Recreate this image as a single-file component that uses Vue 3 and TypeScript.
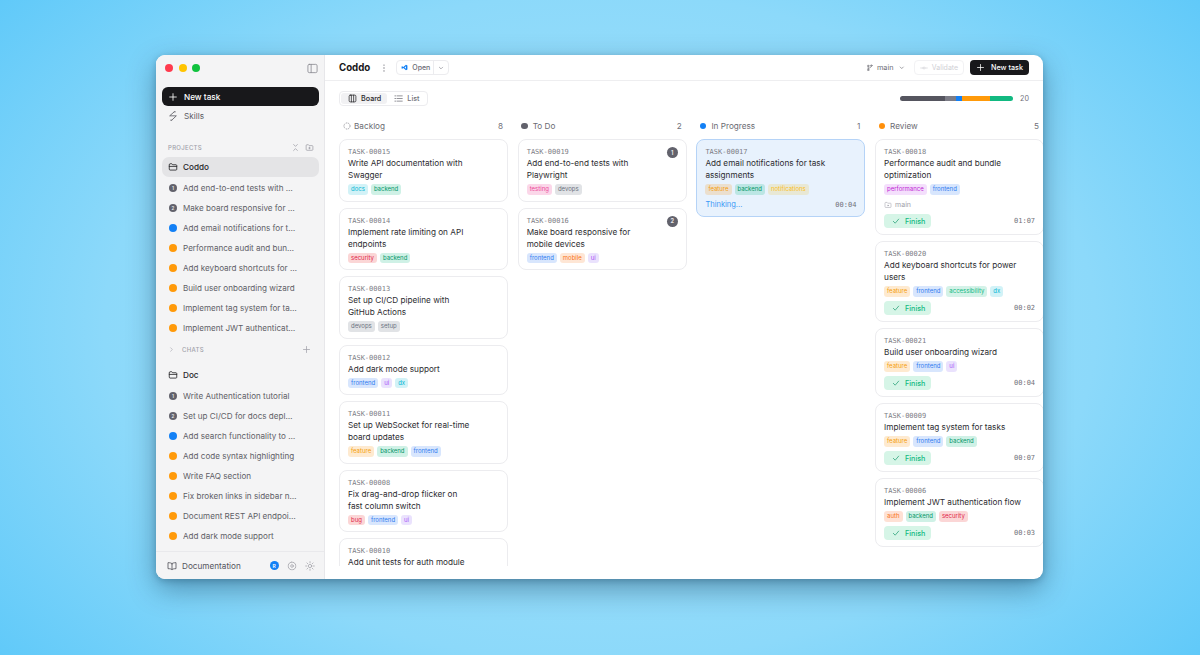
<script setup lang="ts">
interface Task { id: string; title: string; tags: string[]; badge?: number; branch?: boolean; time?: string; finish?: boolean; thinking?: boolean; narrow?: boolean }
interface Column { name: string; count: number; kind: string; tasks: Task[] }
interface SideItem { title: string; status: string; n?: number }

const project: SideItem[] = [
  { title: 'Add end-to-end tests with Playwright', status: 'todo', n: 1 },
  { title: 'Make board responsive for mobile devices', status: 'todo', n: 2 },
  { title: 'Add email notifications for task assignments', status: 'active' },
  { title: 'Performance audit and bundle optimization', status: 'review' },
  { title: 'Add keyboard shortcuts for power users', status: 'review' },
  { title: 'Build user onboarding wizard', status: 'review' },
  { title: 'Implement tag system for tasks', status: 'review' },
  { title: 'Implement JWT authentication flow', status: 'review' },
]
const doc: SideItem[] = [
  { title: 'Write Authentication tutorial', status: 'todo', n: 1 },
  { title: 'Set up CI/CD for docs deployment', status: 'todo', n: 2 },
  { title: 'Add search functionality to docs', status: 'active' },
  { title: 'Add code syntax highlighting', status: 'review' },
  { title: 'Write FAQ section', status: 'review' },
  { title: 'Fix broken links in sidebar navigation', status: 'review' },
  { title: 'Document REST API endpoints', status: 'review' },
  { title: 'Add dark mode support', status: 'review' },
]
const columns: Column[] = [
  { name: 'Backlog', count: 8, kind: 'backlog', tasks: [
    { id: 'TASK-00015', title: 'Write API documentation with Swagger', tags: ['docs', 'backend'] },
    { id: 'TASK-00014', title: 'Implement rate limiting on API endpoints', tags: ['security', 'backend'] },
    { id: 'TASK-00013', title: 'Set up CI/CD pipeline with GitHub Actions', tags: ['devops', 'setup'], narrow: true },
    { id: 'TASK-00012', title: 'Add dark mode support', tags: ['frontend', 'ui', 'dx'] },
    { id: 'TASK-00011', title: 'Set up WebSocket for real-time board updates', tags: ['feature', 'backend', 'frontend'] },
    { id: 'TASK-00008', title: 'Fix drag-and-drop flicker on fast column switch', tags: ['bug', 'frontend', 'ui'], narrow: true },
    { id: 'TASK-00010', title: 'Add unit tests for auth module', tags: ['testing', 'backend'] },
  ] },
  { name: 'To Do', count: 2, kind: 'todo', tasks: [
    { id: 'TASK-00019', title: 'Add end-to-end tests with Playwright', tags: ['testing', 'devops'], badge: 1, narrow: true },
    { id: 'TASK-00016', title: 'Make board responsive for mobile devices', tags: ['frontend', 'mobile', 'ui'], badge: 2, narrow: true },
  ] },
  { name: 'In Progress', count: 1, kind: 'active', tasks: [
    { id: 'TASK-00017', title: 'Add email notifications for task assignments', tags: ['feature', 'backend', 'notifications'], thinking: true, time: '00:04' },
  ] },
  { name: 'Review', count: 5, kind: 'review', tasks: [
    { id: 'TASK-00018', title: 'Performance audit and bundle optimization', tags: ['performance', 'frontend'], branch: true, finish: true, time: '01:07' },
    { id: 'TASK-00020', title: 'Add keyboard shortcuts for power users', tags: ['feature', 'frontend', 'accessibility', 'dx'], finish: true, time: '00:02' },
    { id: 'TASK-00021', title: 'Build user onboarding wizard', tags: ['feature', 'frontend', 'ui'], finish: true, time: '00:04' },
    { id: 'TASK-00009', title: 'Implement tag system for tasks', tags: ['feature', 'frontend', 'backend'], finish: true, time: '00:07' },
    { id: 'TASK-00006', title: 'Implement JWT authentication flow', tags: ['auth', 'backend', 'security'], finish: true, time: '00:03' },
  ] },
]
const segments = [
  { color: '#55555f', width: 45 },
  { color: '#7c7c86', width: 11 },
  { color: '#1380f5', width: 6 },
  { color: '#ff9a0a', width: 28 },
  { color: '#12b981', width: 23 },
]
</script>

<template>
  <div class="page">
    <div class="window">
      <aside class="sidebar">
        <div class="titlebar">
          <div class="lights"><i class="red"></i><i class="yellow"></i><i class="green"></i></div>
          <svg class="ic panel" viewBox="0 0 12 12"><rect x="1" y="1.5" width="10" height="9" rx="1.5"/><path d="M4.5 1.500v9"/></svg>
        </div>
        <div class="side-scroll">
          <button class="new-task">
            <svg class="ic" viewBox="0 0 12 12"><path d="M6 2v8M2 6h8"/></svg>
            <span>New task</span>
          </button>
          <div class="skills">
            <svg class="ic" viewBox="0 0 12 12"><path d="M7.500 1 2 5.800h8L4.500 11M8.800 1H7.500M3.200 11h1.300"/></svg>
            <span>Skills</span>
          </div>
          <div class="section-head">
            <span>PROJECTS</span>
            <div class="section-icons">
              <svg class="ic" viewBox="0 0 12 12"><path d="M3.500 2 6 4.500 8.500 2M3.500 10 6 7.500 8.500 10"/></svg>
              <svg class="ic" viewBox="0 0 12 12"><path d="M1.500 3.200c0-.5.4-.9.9-.9h2.200l1 1.200h4c.5 0 .9.4.9.9v4.400c0 .5-.4.9-.9.9H2.400c-.5 0-.9-.4-.9-.9z"/><path d="M6 5.600v2.200M4.900 6.700h2.200"/></svg>
            </div>
          </div>
          <div class="folder current">
            <svg class="ic" viewBox="0 0 12 12"><path d="M1.500 3c0-.5.4-.9.9-.9h2.200l1 1.200h4c.5 0 .9.4.9.9v4.600c0 .5-.4.9-.9.9H2.400c-.5 0-.9-.4-.9-.9zM1.500 5.300h9"/></svg>
            <span>Coddo</span>
          </div>
          <div v-for="item in project" :key="item.title" class="side-item">
            <span class="dot" :class="item.status">{{ item.n }}</span>
            <span class="side-title">{{ item.title }}</span>
          </div>
          <div class="chats">
            <svg class="ic chev" viewBox="0 0 12 12"><path d="M4.500 3 7.500 6 4.500 9"/></svg>
            <span>CHATS</span>
            <svg class="ic plus" viewBox="0 0 12 12"><path d="M6 2v8M2 6h8"/></svg>
          </div>
          <div class="folder doc">
            <svg class="ic" viewBox="0 0 12 12"><path d="M1.500 3c0-.5.4-.9.9-.9h2.200l1 1.200h4c.5 0 .9.4.9.9v4.600c0 .5-.4.9-.9.9H2.400c-.5 0-.9-.4-.9-.9zM1.500 5.300h9"/></svg>
            <span>Doc</span>
          </div>
          <div v-for="item in doc" :key="item.title" class="side-item">
            <span class="dot" :class="item.status">{{ item.n }}</span>
            <span class="side-title">{{ item.title }}</span>
          </div>
        </div>
        <footer class="side-foot">
          <svg class="ic book" viewBox="0 0 12 12"><path d="M6 3.200C5 2.300 3.500 2 1.200 2v7.200c2.300 0 3.800.3 4.800 1.200 1-.9 2.500-1.200 4.800-1.200V2C8.500 2 7 2.300 6 3.200zM6 3.200v7.200"/></svg>
          <span class="doc-label">Documentation</span>
          <span class="avatar">R</span>
          <svg class="ic foot-ic" viewBox="0 0 12 12"><path d="m6 1 1 .9 1.400-.2.600 1.300 1.300.6-.2 1.400.9 1-.9 1 .2 1.400-1.300.6-.6 1.300-1.400-.2-1 .9-1-.9-1.400.2-.6-1.300-1.300-.6.2-1.400-.9-1 .9-1-.2-1.400 1.300-.6.6-1.300 1.400.2z"/><circle cx="6" cy="6" r="1.600"/></svg>
          <svg class="ic foot-ic" viewBox="0 0 12 12"><circle cx="6" cy="6" r="2"/><path d="M6 .8v1.400M6 9.800v1.400M.8 6h1.400M9.800 6h1.400M2.300 2.300l1 1M8.700 8.700l1 1M2.300 9.700l1-1M8.700 3.300l1-1"/></svg>
        </footer>
      </aside>

      <main class="main">
        <header class="topbar">
          <strong class="brand">Coddo</strong>
          <svg class="kebab" viewBox="0 0 4 12"><circle cx="2" cy="2.500" r=".8"/><circle cx="2" cy="6" r=".8"/><circle cx="2" cy="9.500" r=".8"/></svg>
          <div class="open">
            <span class="open-main">
              <svg class="vscode" viewBox="0 0 12 12"><path d="M8.500 1.200 11 2.400v7.200l-2.500 1.200L4 6.800 2 8.300 1 7.800V4.200l1-.5 2 1.500z" fill="#1380f5"/><path d="M8.500 4 6 6l2.500 2z" fill="#fff"/></svg>
              Open
            </span>
            <span class="open-chev"><svg class="ic" viewBox="0 0 12 12"><path d="M3.500 4.800 6 7.300l2.500-2.500"/></svg></span>
          </div>
          <div class="spacer"></div>
          <div class="branch">
            <svg class="ic" viewBox="0 0 12 12"><circle cx="3.500" cy="9.500" r="1.200"/><circle cx="3.500" cy="3" r="1.200"/><circle cx="8.500" cy="2.500" r="1.200"/><path d="M3.500 4.200v4.100M8.500 3.700c0 2-2.500 2.800-5 3.300"/></svg>
            <span>main</span>
            <svg class="ic small" viewBox="0 0 12 12"><path d="M3.500 4.800 6 7.300l2.500-2.500"/></svg>
          </div>
          <div class="validate">
            <svg class="ic" viewBox="0 0 12 12"><path d="M1 6h3M8 6h3M4.500 6a1.500 1.500 0 1 0 3 0 1.500 1.500 0 1 0-3 0"/></svg>
            <span>Validate</span>
          </div>
          <button class="new-top">
            <svg class="ic" viewBox="0 0 12 12"><path d="M6 2v8M2 6h8"/></svg>
            <span>New task</span>
          </button>
        </header>

        <div class="toolbar">
          <div class="tabs">
            <div class="tab on">
              <svg class="ic" viewBox="0 0 12 12"><rect x="1.500" y="1.500" width="9" height="9" rx="1.500"/><path d="M4.500 1.500v9M7.500 1.500v9"/></svg>
              <span>Board</span>
            </div>
            <div class="tab">
              <svg class="ic" viewBox="0 0 12 12"><path d="M4 2.500h7M4 6h7M4 9.500h7M1.200 2.500h1M1.200 6h1M1.200 9.500h1"/></svg>
              <span>List</span>
            </div>
          </div>
          <div class="spacer"></div>
          <div class="stack">
            <span v-for="s in segments" :key="s.color" :style="{ background: s.color, width: s.width + 'px' }"></span>
          </div>
          <span class="total">20</span>
        </div>

        <div class="board">
          <section v-for="col in columns" :key="col.name" class="column">
            <div class="col-head">
              <svg v-if="col.kind === 'backlog'" class="backlog-ic" viewBox="0 0 10 10"><circle cx="5" cy="5" r="3.800" stroke-dasharray="1.700 1"/></svg>
              <i v-else class="col-dot" :class="col.kind"></i>
              <span class="col-name">{{ col.name }}</span>
              <span class="col-count">{{ col.count }}</span>
            </div>
            <article v-for="t in col.tasks" :key="t.id" class="card" :class="{ running: t.thinking }">
              <span v-if="t.badge" class="badge">{{ t.badge }}</span>
              <div class="task-id">{{ t.id }}</div>
              <div class="task-title" :class="{ narrow: t.narrow }">{{ t.title }}</div>
              <div class="tags"><span v-for="tag in t.tags" :key="tag" class="tag" :class="'tag-' + tag">{{ tag }}</span></div>
              <div v-if="t.branch" class="card-branch">
                <svg class="ic" viewBox="0 0 12 12"><path d="M1.500 3c0-.5.4-.9.9-.9h2.200l1 1.200h4c.5 0 .9.4.9.9v4.600c0 .5-.4.9-.9.900H2.400c-.5 0-.9-.4-.9-.9z"/><circle cx="6" cy="6.700" r=".8"/></svg>
                <span>main</span>
              </div>
              <div v-if="t.thinking" class="card-foot thinking-row">
                <span class="thinking">Thinking...</span>
                <span class="time">{{ t.time }}</span>
              </div>
              <div v-if="t.finish" class="card-foot">
                <span class="finish">
                  <svg class="ic" viewBox="0 0 12 12"><path d="m2 6.500 2.800 2.800L10 3.200"/></svg>
                  Finish
                </span>
                <span class="time">{{ t.time }}</span>
              </div>
            </article>
          </section>
        </div>
      </main>
    </div>
  </div>
</template>

<style>
html, body { margin: 0; padding: 0; }
</style>

<style scoped>
.page {
  box-sizing: border-box;
  width: 1200px;
  height: 655px;
  padding: 55px 157px 76px 156px;
  background: radial-gradient(ellipse 800px 540px at 50% 50%, #a8e3fb 0%, #8cd9fa 62%, #5cc8f9 100%);
  font-family: Inter, "Liberation Sans", sans-serif;
  overflow: hidden;
}
.window {
  display: flex;
  height: 524px;
  background: #fff;
  border-radius: 9px;
  overflow: hidden;
  box-shadow: 0 10px 28px rgba(10, 50, 80, .42), 0 2px 6px rgba(10, 50, 80, .25);
}
.ic { width: 10px; height: 10px; fill: none; stroke: currentColor; stroke-width: 1; stroke-linecap: round; stroke-linejoin: round; flex: none; }
.spacer { flex: 1; }

.sidebar { width: 169px; flex: none; display: flex; flex-direction: column; background: #f4f4f5; border-right: 1px solid #e7e7ea; box-sizing: border-box; }
.titlebar { height: 26px; flex: none; display: flex; align-items: center; justify-content: space-between; padding: 0 6px 0 9px; }
.lights { display: flex; gap: 5.500px; }
.lights i { width: 8px; height: 8px; border-radius: 50%; display: block; }
.red { background: #ff3b4e; } .yellow { background: #ffc400; } .green { background: #10c23e; }
.panel { color: #8a8a92; width: 11px; height: 11px; stroke-width: .9; }
.side-scroll { flex: 1; min-height: 0; overflow: hidden; padding: 6px 5px 0 6px; display: flex; flex-direction: column; }
.new-task { height: 19px; flex: none; display: flex; align-items: center; gap: 6px; padding: 0 0 0 6px; background: #18181b; color: #fff; border: 0; border-radius: 6px; font: 500 8.200px Inter, sans-serif; }
.skills { height: 20px; flex: none; display: flex; align-items: center; gap: 6px; padding-left: 6px; color: #5b5b63; font-size: 8.200px; font-weight: 400; }
.section-head { height: 14px; margin-top: 14px; flex: none; display: flex; align-items: center; justify-content: space-between; padding: 0 5px 0 6px; color: #a1a1aa; font-size: 6px; font-weight: 500; letter-spacing: .3px; }
.section-icons { display: flex; gap: 5px; color: #9d9da5; }
.section-icons .ic { width: 9px; height: 9px; }
.folder { height: 20px; flex: none; display: flex; align-items: center; gap: 5px; padding-left: 6px; color: #27272a; font-size: 8.200px; font-weight: 500; border-radius: 7px; }
.folder .ic { width: 10px; height: 10px; }
.folder.current { margin-top: 3px; margin-bottom: 1px; background: #e4e4e6; }
.side-item { height: 20px; flex: none; display: flex; align-items: center; gap: 6px; padding-left: 7px; color: #5f5f67; font-size: 8.100px; font-weight: 400; }
.side-title { width: 114px; overflow: hidden; white-space: nowrap; text-overflow: ellipsis; }
.dot { width: 8px; height: 8px; border-radius: 50%; flex: none; display: flex; align-items: center; justify-content: center; color: #e4e4e7; font-size: 4.500px; font-weight: 700; }
.dot.todo { background: #62626c; } .dot.active { background: #1380f5; } .dot.review { background: #ff9a0a; }
.chats { height: 20px; margin-top: 1px; margin-bottom: 6px; flex: none; display: flex; align-items: center; padding: 0 8px 0 6px; color: #a1a1aa; font-size: 6px; font-weight: 500; letter-spacing: .3px; }
.chats .chev { width: 7px; height: 7px; margin-right: 7px; }
.chats .plus { margin-left: auto; width: 9px; height: 9px; }
.folder.doc { margin-bottom: 1px; }
.side-foot { height: 28px; flex: none; display: flex; align-items: center; padding: 0 5px 0 11px; border-top: 1px solid #e9e9ec; box-sizing: border-box; color: #55555d; font-size: 8.200px; font-weight: 400; }
.book { width: 10px; height: 10px; margin-right: 5px; }
.doc-label { flex: 1; }
.avatar { width: 9.500px; height: 9.500px; border-radius: 50%; background: #1380f5; color: #fff; font-size: 5px; font-weight: 600; display: flex; align-items: center; justify-content: center; margin-right: 8px; }
.foot-ic { color: #9a9aa2; margin-right: 8px; stroke-width: .8; }
.foot-ic:last-child { margin-right: 4px; }

.main { flex: 1; min-width: 0; display: flex; flex-direction: column; }
.topbar { height: 26px; flex: none; box-sizing: border-box; display: flex; align-items: center; padding: 0 14px; border-bottom: 1px solid #eeeef0; }
.brand { font-size: 9.700px; font-weight: 700; color: #18181b; }
.kebab { width: 4px; height: 10px; fill: #71717a; margin: 0 10px 0 12px; }
.open { display: flex; align-items: center; height: 15px; width: 53px; box-sizing: border-box; border: 1px solid #ececef; border-radius: 4px; color: #6b6b73; font-size: 7px; font-weight: 500; }
.open-main { flex: 1; display: flex; align-items: center; gap: 4px; padding-left: 4px; }
.vscode { width: 7px; height: 7px; }
.open-chev { width: 14px; height: 100%; display: flex; align-items: center; justify-content: center; border-left: 1px solid #ececef; color: #8a8a92; }
.open-chev .ic { width: 8px; height: 8px; }
.branch { display: flex; align-items: center; gap: 3px; color: #6b6b73; font-size: 7.300px; margin-right: 9px; }
.branch .ic { width: 7.500px; height: 7.500px; }
.branch span { margin-right: 1px; }
.validate { width: 50px; height: 15px; box-sizing: border-box; display: flex; align-items: center; gap: 4px; justify-content: center; border: 1px solid #f2f2f4; border-radius: 4px; color: #d0d0d5; font-size: 7px; margin-right: 6px; }
.validate .ic { width: 8px; height: 8px; }
.new-top { width: 59px; height: 15px; display: flex; align-items: center; justify-content: center; gap: 6px; background: #18181b; color: #fff; border: 0; border-radius: 4px; padding: 0; font: 500 7.200px Inter, sans-serif; }
.new-top .ic { width: 9px; height: 9px; }

.toolbar { height: 15px; margin-top: 10px; flex: none; display: flex; align-items: center; padding: 0 14px; }
.tabs { display: flex; height: 15px; width: 89px; box-sizing: border-box; border: 1px solid #ececef; border-radius: 4px; padding: 1px; background: #fff; }
.tab { display: flex; align-items: center; gap: 4px; padding: 0 6px 0 7px; color: #71717a; font-size: 7.200px; font-weight: 500; border-radius: 3px; }
.tab.on { background: #f1f1f3; color: #27272a; }
.tab .ic { width: 9px; height: 9px; }
.stack { display: flex; height: 5px; border-radius: 3px; overflow: hidden; }
.stack span { display: block; height: 100%; }
.total { width: 9px; margin-left: 7px; text-align: right; font-size: 7.200px; color: #71717a; }

.board { flex: 1; min-height: 0; margin-top: 13px; margin-bottom: 13px; padding-left: 14px; display: flex; gap: 9.700px; overflow: hidden; }
.column { width: 169px; flex: none; display: flex; flex-direction: column; gap: 6px; }
.col-head { height: 14px; display: flex; align-items: center; padding: 0 5px 0 3.500px; flex: none; color: #6b6b73; font-size: 8.200px; font-weight: 400; }
.backlog-ic { width: 8px; height: 8px; fill: none; stroke: #8a8a92; stroke-width: 1; margin-right: 3.500px; }
.col-dot { width: 6.500px; height: 6.500px; border-radius: 50%; margin-right: 5px; display: block; }
.col-dot.todo { background: #62626c; } .col-dot.active { background: #1380f5; } .col-dot.review { background: #ff8f0a; }
.col-count { margin-left: auto; color: #71717a; }

.card { position: relative; flex: none; box-sizing: border-box; background: #fff; border: 1px solid #ececef; border-radius: 8px; padding: 7px 8px 6px; }
.card.running { background: #e8f2fd; border-color: #b5d3f7; }
.badge { position: absolute; top: 7px; right: 8px; width: 11px; height: 11px; border-radius: 50%; background: #62626c; color: #e8e8ea; font-size: 5.500px; font-weight: 700; display: flex; align-items: center; justify-content: center; }
.task-id { font: 400 7px/10px "DejaVu Sans Mono", monospace; color: #7d7d85; }
.task-title { width: 138px; font-size: 8.200px; line-height: 12px; color: #2d2d31; font-weight: 400; }
.task-title.narrow { width: 120px; }
.tags { display: flex; gap: 3px; margin-top: 3px; height: 10.500px; }
.tag { padding: 0 3px; height: 10.500px; line-height: 10.500px; border-radius: 3px; font-size: 6px; font-weight: 400; white-space: nowrap; }
.tag-docs, .tag-dx { background: rgba(6, 182, 212, .18); color: #06b6d4; }
.tag-backend { background: rgba(16, 185, 129, .2); color: #059669; }
.tag-feature { background: rgba(249, 150, 22, .2); color: #f59e0b; }
.tag-frontend { background: rgba(59, 130, 246, .2); color: #2f7cf0; }
.tag-ui { background: rgba(139, 92, 246, .18); color: #a855f7; }
.tag-security, .tag-bug { background: rgba(239, 68, 68, .22); color: #e11d48; }
.tag-testing { background: rgba(236, 72, 153, .22); color: #ec4899; }
.tag-devops, .tag-setup { background: rgba(107, 114, 128, .2); color: #6b7280; }
.tag-mobile { background: rgba(249, 115, 22, .18); color: #f97316; }
.tag-performance { background: rgba(192, 80, 240, .18); color: #c026d3; }
.tag-accessibility { background: rgba(16, 185, 129, .18); color: #10b981; }
.tag-auth { background: rgba(249, 90, 22, .18); color: #f97316; }
.tag-notifications { background: rgba(234, 179, 8, .16); color: #fbbf24; }
.card-branch { display: flex; align-items: center; gap: 3px; height: 10px; margin-top: 5px; color: #a1a1aa; font-size: 7px; }
.card-branch .ic { width: 8px; height: 8px; stroke-width: .8; }
.card-foot { display: flex; align-items: center; justify-content: space-between; margin-top: 4.500px; min-height: 14px; }
.thinking-row { min-height: 10px; margin-top: 5px; }
.thinking { color: #3b98f5; font-size: 7.500px; }
.time { font: 400 7px "DejaVu Sans Mono", monospace; color: #71717a; }
.finish { width: 47px; height: 14px; box-sizing: border-box; display: flex; align-items: center; gap: 5px; padding-left: 8px; border-radius: 4px; background: #d6f5e7; color: #10b981; font-size: 7.200px; font-weight: 500; }
.finish .ic { width: 8px; height: 8px; color: #0d9668; }
</style>
